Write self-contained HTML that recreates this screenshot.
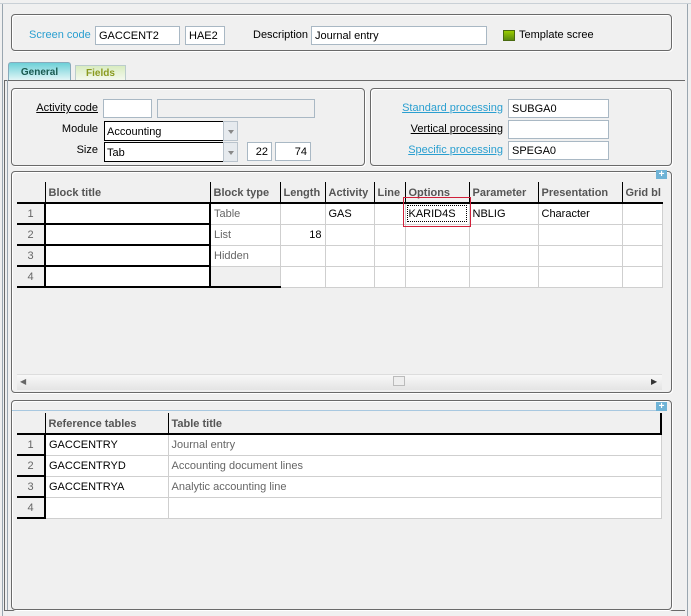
<!DOCTYPE html>
<html><head><meta charset="utf-8"><style>
*{box-sizing:border-box;margin:0;padding:0}
body{width:691px;height:616px;background:#f0f0f0;position:relative;overflow:hidden;font-family:"Liberation Sans",sans-serif;font-size:11px;color:#000}
.a{position:absolute}
.grp{position:absolute;border:1px solid #6a6a6a;border-radius:4px;box-shadow:inset 1px 1px 0 #fff,1px 1px 0 #fff}
.in{position:absolute;background:#fff;border:1px solid #a9b8c4;height:19px;line-height:19px;padding-left:3px;white-space:nowrap;overflow:hidden}
.lbl{position:absolute;white-space:nowrap;line-height:16px}
.r{text-align:right}
.u{text-decoration:underline}
.blue{color:#2a9fd0}
.combo{position:absolute;background:#fff;border:1px solid #000;height:20px;line-height:20px;padding-left:2px}
.arr{position:absolute;width:15px;height:20px;background:#e6eaee;border:1px solid #b9c3cc}
.arr:after{content:"";position:absolute;left:4px;top:8px;border:3px solid transparent;border-top:4px solid #888}
table{border-collapse:collapse;position:absolute;table-layout:fixed}
td{height:21px;border:1px solid #cfcfcf;padding:1px 3px 0;white-space:nowrap;overflow:hidden;background:#fff;line-height:18px}
th{height:21px;background:#f0f0f0;color:#555;font-weight:bold;text-align:left;padding:1px 3px 0;white-space:nowrap;overflow:hidden;border-bottom:2px solid #000;border-left:1px solid #000;line-height:18px}
td.n{background:#f0f0f0;color:#666;text-align:center;border:none;border-bottom:2px solid #000;border-right:2px solid #000}
td.bt{border-right:2px solid #000;border-bottom:2px solid #000}
.gray{color:#666}
.plus{position:absolute;width:11px;height:9px;background:#6fb3d6;color:#fff;font-size:10px;line-height:9px;text-align:center;font-weight:bold}
</style></head><body>
<div class="a" style="left:0;top:0;width:691px;height:4px;border-bottom:1px solid #c9d0d6"></div>
<div class="a" style="left:2px;top:4px;width:1px;height:612px;background:#9aa6b0"></div>
<div class="a" style="left:687px;top:4px;width:1px;height:612px;background:#9aa6b0"></div>

<div class="grp" style="left:11px;top:14px;width:661px;height:37px"></div>
<div class="lbl blue" style="left:29px;top:27px">Screen code</div>
<div class="in" style="left:95px;top:26px;width:85px">GACCENT2</div>
<div class="in" style="left:185px;top:26px;width:40px">HAE2</div>
<div class="lbl" style="left:253px;top:27px">Description</div>
<div class="in" style="left:311px;top:26px;width:176px">Journal entry</div>
<div class="a" style="left:503px;top:30px;width:12px;height:11px;background:linear-gradient(#9c0,#5a8a10);border:1px solid #4a6a10"></div>
<div class="lbl" style="left:519px;top:27px">Template scree</div>

<div class="a" style="left:8px;top:62px;width:63px;height:19px;background:linear-gradient(#6dd0d8,#e8f8f8);border:1px solid #8ab;border-bottom:none;border-radius:3px 3px 0 0;font-weight:bold;font-size:10px;color:#1a5a50;text-align:center;line-height:20px">General</div>
<div class="a" style="left:75px;top:65px;width:51px;height:15px;background:linear-gradient(#d8ecc0,#f4f8ee);border:1px solid #bcc;border-bottom:none;font-weight:bold;font-size:10px;color:#8a9a20;text-align:center;line-height:16px">Fields</div>
<div class="a" style="left:4px;top:80px;width:681px;height:531px;border:1px solid #6a6a6a;border-right:none"></div>
<div class="a" style="left:7px;top:80px;width:1px;height:530px;background:#9aa6b0"></div>

<div class="grp" style="left:11px;top:88px;width:354px;height:78px"></div>
<div class="lbl u r" style="right:593px;top:100px">Activity code</div>
<div class="in" style="left:103px;top:99px;width:49px"></div>
<div class="in" style="left:157px;top:99px;width:158px;background:#f0f0f0"></div>
<div class="lbl r" style="right:593px;top:121px">Module</div>
<div class="combo" style="left:104px;top:121px;width:120px">Accounting</div>
<div class="arr" style="left:223px;top:121px"></div>
<div class="lbl r" style="right:593px;top:142px">Size</div>
<div class="combo" style="left:104px;top:142px;width:120px">Tab</div>
<div class="arr" style="left:223px;top:142px"></div>
<div class="in" style="left:247px;top:142px;width:25px;text-align:right;padding-right:3px">22</div>
<div class="in" style="left:275px;top:142px;width:36px;text-align:right;padding-right:3px">74</div>

<div class="grp" style="left:370px;top:88px;width:302px;height:78px"></div>
<div class="lbl u blue r" style="right:188px;top:100px">Standard processing</div>
<div class="in" style="left:508px;top:99px;width:101px">SUBGA0</div>
<div class="lbl u r" style="right:188px;top:121px">Vertical processing</div>
<div class="in" style="left:508px;top:120px;width:101px"></div>
<div class="lbl u blue r" style="right:188px;top:142px">Specific processing</div>
<div class="in" style="left:508px;top:141px;width:101px">SPEGA0</div>

<div class="grp" style="left:11px;top:171px;width:661px;height:222px"></div>
<div class="plus" style="left:656px;top:170px">+</div>
<table style="left:17px;top:182px;width:645px">
<colgroup><col style="width:28px"><col style="width:165px"><col style="width:70px"><col style="width:45px"><col style="width:49px"><col style="width:31px"><col style="width:64px"><col style="width:69px"><col style="width:84px"><col style="width:40px"></colgroup>
<tr><th style="border-left:none"></th><th>Block title</th><th>Block type</th><th>Length</th><th>Activity</th><th>Line</th><th>Options</th><th>Parameter</th><th>Presentation</th><th>Grid bl</th></tr>
<tr><td class="n">1</td><td class="bt"></td><td class="gray">Table</td><td></td><td>GAS</td><td></td><td style="outline:1px dotted #000;outline-offset:-3px">KARID4S</td><td>NBLIG</td><td>Character</td><td></td></tr>
<tr><td class="n">2</td><td class="bt"></td><td class="gray">List</td><td style="text-align:right">18</td><td></td><td></td><td></td><td></td><td></td><td></td></tr>
<tr><td class="n">3</td><td class="bt"></td><td class="gray">Hidden</td><td></td><td></td><td></td><td></td><td></td><td></td><td></td></tr>
<tr><td class="n">4</td><td class="bt" style="border-right:2px solid #000"></td><td style="background:#f0f0f0;border-bottom:2px solid #000;border-left:none"></td><td></td><td></td><td></td><td></td><td></td><td></td><td></td></tr>
</table>
<div class="a" style="left:403px;top:197px;width:68px;height:30px;border:1px solid #d0203a"></div>
<div class="a" style="left:17px;top:374px;width:645px;height:16px;background:linear-gradient(#f8f8f8,#e4e4e4);border-top:1px solid #ddd"></div>
<div class="a" style="left:20px;top:377px;font-size:8px;color:#666">&#9664;</div>
<div class="a" style="left:393px;top:376px;width:12px;height:10px;border:1px solid #bbb;background:#eee"></div>
<div class="a" style="left:651px;top:377px;font-size:8px;color:#333">&#9654;</div>

<div class="grp" style="left:11px;top:400px;width:661px;height:210px"></div>
<div class="a" style="left:12px;top:402px;width:650px;height:9px;border-bottom:1px solid #a8c8e0"></div>
<div class="plus" style="left:656px;top:402px">+</div>
<table style="left:17px;top:413px;width:644px">
<colgroup><col style="width:28px"><col style="width:123px"><col style="width:493px"></colgroup>
<tr><th style="border-left:none"></th><th>Reference tables</th><th style="border-right:2px solid #000">Table title</th></tr>
<tr><td class="n">1</td><td>GACCENTRY</td><td class="gray">Journal entry</td></tr>
<tr><td class="n">2</td><td>GACCENTRYD</td><td class="gray">Accounting document lines</td></tr>
<tr><td class="n">3</td><td>GACCENTRYA</td><td class="gray">Analytic accounting line</td></tr>
<tr><td class="n">4</td><td></td><td></td></tr>
</table>
</body></html>
